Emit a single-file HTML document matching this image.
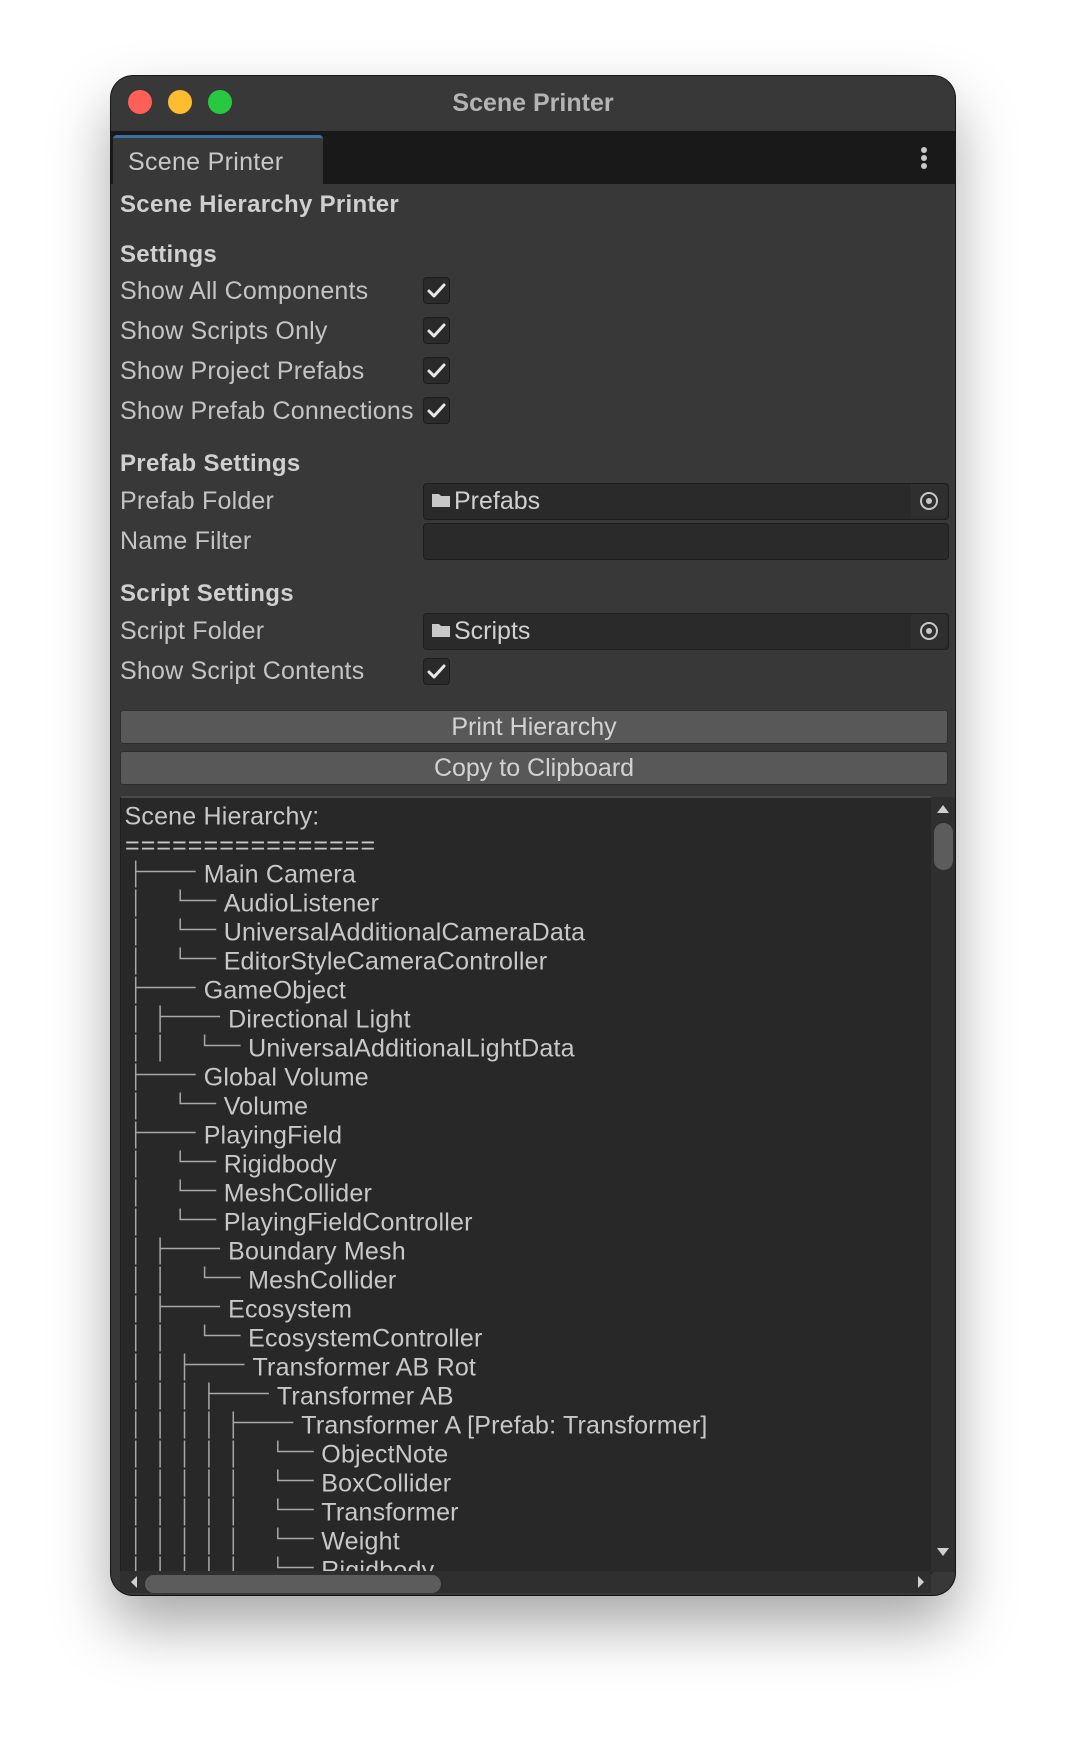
<!DOCTYPE html>
<html><head><meta charset="utf-8"><style>
html,body{margin:0;padding:0;width:1068px;height:1744px;background:#fff;overflow:hidden;font-family:"Liberation Sans",sans-serif}
.win{position:absolute;left:111px;top:76px;width:844px;height:1519px;background:#383838;border-radius:22px;box-shadow:0 30px 60px rgba(0,0,0,.35),0 0 0 1px #1a1a1a;overflow:hidden}
.a{position:absolute}
.lbl{position:absolute;left:9px;font-size:25px;color:#c4c4c4;line-height:30px;white-space:nowrap;letter-spacing:0.2px}
.hdr{position:absolute;left:9px;font-size:24px;font-weight:bold;color:#d0d0d0;line-height:30px;white-space:nowrap;letter-spacing:0.3px}
.cb{position:absolute;left:312px;width:25px;height:25px;background:#2a2a2a;border:1px solid #1c1c1c;border-radius:4px}
.fld{position:absolute;left:312px;width:524px;height:35px;background:#2a2a2a;border:1px solid #1e1e1e;border-radius:4px}
.btn{position:absolute;left:9px;width:826px;height:32px;background:#585858;border:1px solid #2e2e2e;border-radius:3px;color:#d2d2d2;font-size:25px;line-height:32px;text-align:center}
</style></head><body>
<div class="win">
 <div class="a" style="left:17px;top:14px;width:24px;height:24px;border-radius:50%;background:#fe5f57"></div>
 <div class="a" style="left:57px;top:14px;width:24px;height:24px;border-radius:50%;background:#febc2e"></div>
 <div class="a" style="left:97px;top:14px;width:24px;height:24px;border-radius:50%;background:#28c840"></div>
 <div class="a" style="left:0;width:844px;top:11px;text-align:center;font-size:25px;font-weight:bold;color:#b4b4b4;line-height:32px">Scene Printer</div>
 <div class="a" style="left:0;top:55px;width:844px;height:53px;background:#191919"></div>
 <div class="a" style="left:2px;top:59px;width:210px;height:49px;background:#383838;border-top:3px solid #3a6fa8;border-radius:4px 4px 0 0;box-sizing:border-box"></div>
 <div class="a" style="left:17px;top:71px;font-size:25px;color:#c8c8c8;line-height:30px;letter-spacing:0.3px">Scene Printer</div>
 <div class="a" style="left:810px;top:71px;width:6px;height:6px;border-radius:50%;background:#c8c8c8"></div>
 <div class="a" style="left:810px;top:79px;width:6px;height:6px;border-radius:50%;background:#c8c8c8"></div>
 <div class="a" style="left:810px;top:87px;width:6px;height:6px;border-radius:50%;background:#c8c8c8"></div>

 <div class="hdr" style="top:114px">Scene Hierarchy Printer</div>
 <div class="hdr" style="top:164px">Settings</div>
 <div class="lbl" style="top:200px">Show All Components</div>
 <div class="lbl" style="top:240px">Show Scripts Only</div>
 <div class="lbl" style="top:280px">Show Project Prefabs</div>
 <div class="lbl" style="top:320px">Show Prefab Connections</div>
 <div class="cb" style="top:201px"></div><div class="cb" style="top:241px"></div><div class="cb" style="top:281px"></div><div class="cb" style="top:321px"></div>
 <div class="hdr" style="top:373px">Prefab Settings</div>
 <div class="lbl" style="top:410px">Prefab Folder</div>
 <div class="lbl" style="top:450px">Name Filter</div>
 <div class="fld" style="top:407px"></div>
 <div class="fld" style="top:447px"></div>
 <div class="hdr" style="top:503px">Script Settings</div>
 <div class="lbl" style="top:540px">Script Folder</div>
 <div class="lbl" style="top:580px">Show Script Contents</div>
 <div class="fld" style="top:537px"></div>
 <div class="cb" style="top:582px"></div>
 <div class="a" style="left:343px;top:410px;font-size:25px;color:#d0d0d0;line-height:30px">Prefabs</div>
 <div class="a" style="left:343px;top:540px;font-size:25px;color:#d0d0d0;line-height:30px">Scripts</div>
 <div class="a" style="left:800px;top:408px;width:36px;height:34px;background:#2f2f2f;border-radius:0 4px 4px 0"></div>
 <div class="a" style="left:800px;top:538px;width:36px;height:34px;background:#2f2f2f;border-radius:0 4px 4px 0"></div>

 <div class="btn" style="top:634px">Print Hierarchy</div>
 <div class="btn" style="top:675px">Copy to Clipboard</div>

 <div class="a" style="left:9px;top:720px;width:810px;height:775px;background:#282828;border:1px solid #1e1e1e;border-top:2px solid #4a4a4a"></div>
 <div class="a" style="left:820px;top:721px;width:24px;height:775px;background:#2f2f2f"></div>
 <div class="a" style="left:823px;top:747px;width:19px;height:47px;border-radius:10px;background:#5c5c5c"></div>
 <div class="a" style="left:9px;top:1495px;width:811px;height:22px;background:#2f2f2f"></div>
 <div class="a" style="left:34px;top:1499px;width:296px;height:18px;border-radius:9px;background:#5c5c5c"></div>
</div>
<svg class="a" style="left:0;top:0" width="1068" height="1744" viewBox="0 0 1068 1744">
 <defs><clipPath id="c"><rect x="120" y="798" width="810" height="773"/></clipPath></defs>
 <g fill="none" stroke="#e8e8e8" stroke-width="3" stroke-linecap="round" stroke-linejoin="round">
  <path d="M429 291l5 5 10-11"/><path d="M429 331l5 5 10-11"/><path d="M429 371l5 5 10-11"/><path d="M429 411l5 5 10-11"/><path d="M429 672l5 5 10-11"/>
 </g>
 <g fill="#c8c8c8"><path d="M432 494h7l2 2h9v11h-18z"/><path d="M432 624h7l2 2h9v11h-18z"/></g>
 <g fill="none" stroke="#c8c8c8" stroke-width="2"><circle cx="929" cy="501" r="8"/><circle cx="929" cy="631" r="8"/></g>
 <circle cx="929" cy="501" r="3" fill="#c8c8c8"/><circle cx="929" cy="631" r="3" fill="#c8c8c8"/>
 <g fill="#d0d0d0"><path d="M937 813l6-8 6 8z"/><path d="M937 1548l6 8 6-8z"/><path d="M131 1582l6-6v12z"/><path d="M918 1576l6 6-6 6z"/></g>
 <g clip-path="url(#c)" font-family="Liberation Sans, sans-serif" font-size="25" fill="#c8c8c8" letter-spacing="0.2">
  <text x="124.5" y="824.5">Scene Hierarchy:</text>
  <text x="125" y="853.5" letter-spacing="1.1">================</text>
  <g fill="none" stroke="#a8a8a8" stroke-width="1.5">
   <path transform="translate(0,873.5)" d="M135.7-13V14M135.7-2H195.7"/>
   <path transform="translate(0,902.5)" d="M135.7-13V14M180.2-13V-2H216.2"/>
   <path transform="translate(0,931.5)" d="M135.7-13V14M180.2-13V-2H216.2"/>
   <path transform="translate(0,960.5)" d="M135.7-13V14M180.2-13V-2H216.2"/>
   <path transform="translate(0,989.5)" d="M135.7-13V14M135.7-2H195.7"/>
   <path transform="translate(0,1018.5)" d="M135.7-13V14M160.1-13V14M160.1-2H220.1"/>
   <path transform="translate(0,1047.5)" d="M135.7-13V14M160.1-13V14M204.6-13V-2H240.6"/>
   <path transform="translate(0,1076.5)" d="M135.7-13V14M135.7-2H195.7"/>
   <path transform="translate(0,1105.5)" d="M135.7-13V14M180.2-13V-2H216.2"/>
   <path transform="translate(0,1134.5)" d="M135.7-13V14M135.7-2H195.7"/>
   <path transform="translate(0,1163.5)" d="M135.7-13V14M180.2-13V-2H216.2"/>
   <path transform="translate(0,1192.5)" d="M135.7-13V14M180.2-13V-2H216.2"/>
   <path transform="translate(0,1221.5)" d="M135.7-13V14M180.2-13V-2H216.2"/>
   <path transform="translate(0,1250.5)" d="M135.7-13V14M160.1-13V14M160.1-2H220.1"/>
   <path transform="translate(0,1279.5)" d="M135.7-13V14M160.1-13V14M204.6-13V-2H240.6"/>
   <path transform="translate(0,1308.5)" d="M135.7-13V14M160.1-13V14M160.1-2H220.1"/>
   <path transform="translate(0,1337.5)" d="M135.7-13V14M160.1-13V14M204.6-13V-2H240.6"/>
   <path transform="translate(0,1366.5)" d="M135.7-13V14M160.1-13V14M184.5-13V14M184.5-2H244.5"/>
   <path transform="translate(0,1395.5)" d="M135.7-13V14M160.1-13V14M184.5-13V14M208.9-13V14M208.9-2H268.9"/>
   <path transform="translate(0,1424.5)" d="M135.7-13V14M160.1-13V14M184.5-13V14M208.9-13V14M233.3-13V14M233.3-2H293.3"/>
   <path transform="translate(0,1453.5)" d="M135.7-13V14M160.1-13V14M184.5-13V14M208.9-13V14M233.3-13V14M277.8-13V-2H313.8"/>
   <path transform="translate(0,1482.5)" d="M135.7-13V14M160.1-13V14M184.5-13V14M208.9-13V14M233.3-13V14M277.8-13V-2H313.8"/>
   <path transform="translate(0,1511.5)" d="M135.7-13V14M160.1-13V14M184.5-13V14M208.9-13V14M233.3-13V14M277.8-13V-2H313.8"/>
   <path transform="translate(0,1540.5)" d="M135.7-13V14M160.1-13V14M184.5-13V14M208.9-13V14M233.3-13V14M277.8-13V-2H313.8"/>
   <path transform="translate(0,1569.5)" d="M135.7-13V14M160.1-13V14M184.5-13V14M208.9-13V14M233.3-13V14M277.8-13V-2H313.8"/>
  </g>
  <text x="203.7" y="882.5">Main Camera</text>
  <text x="223.7" y="911.5">AudioListener</text>
  <text x="223.7" y="940.5">UniversalAdditionalCameraData</text>
  <text x="223.7" y="969.5">EditorStyleCameraController</text>
  <text x="203.7" y="998.5">GameObject</text>
  <text x="228.1" y="1027.5">Directional Light</text>
  <text x="248.1" y="1056.5">UniversalAdditionalLightData</text>
  <text x="203.7" y="1085.5">Global Volume</text>
  <text x="223.7" y="1114.5">Volume</text>
  <text x="203.7" y="1143.5">PlayingField</text>
  <text x="223.7" y="1172.5">Rigidbody</text>
  <text x="223.7" y="1201.5">MeshCollider</text>
  <text x="223.7" y="1230.5">PlayingFieldController</text>
  <text x="228.1" y="1259.5">Boundary Mesh</text>
  <text x="248.1" y="1288.5">MeshCollider</text>
  <text x="228.1" y="1317.5">Ecosystem</text>
  <text x="248.1" y="1346.5">EcosystemController</text>
  <text x="252.5" y="1375.5">Transformer AB Rot</text>
  <text x="276.9" y="1404.5">Transformer AB</text>
  <text x="301.3" y="1433.5">Transformer A [Prefab: Transformer]</text>
  <text x="321.3" y="1462.5">ObjectNote</text>
  <text x="321.3" y="1491.5">BoxCollider</text>
  <text x="321.3" y="1520.5">Transformer</text>
  <text x="321.3" y="1549.5">Weight</text>
  <text x="321.3" y="1578.5">Rigidbody</text>
 </g>
</svg>
</body></html>
